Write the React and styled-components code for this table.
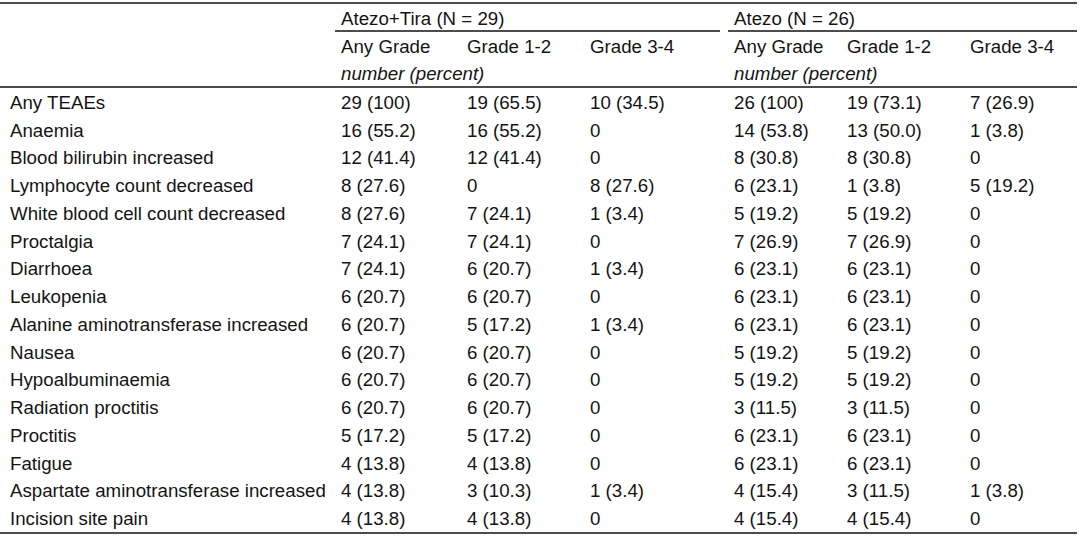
import React from "react";
import styled, { createGlobalStyle } from "styled-components";

const GlobalStyle = createGlobalStyle`
  html, body {
    margin: 0;
    padding: 0;
    background: #ffffff;
  }
  body {
    font-family: "Liberation Sans", Arial, Helvetica, sans-serif;
    color: #141414;
  }
`;

const RULE = "#4d4d4d";

const Frame = styled.div`
  width: 1077px;
  margin-top: 2px;
  border-top: 2px solid ${RULE};
  border-bottom: 2px solid ${RULE};
`;

const Table = styled.table`
  width: 1077px;
  table-layout: fixed;
  border-collapse: separate;
  border-spacing: 0;
  font-size: 18.7px;
  font-family: "Liberation Sans", Arial, Helvetica, sans-serif;
  color: #141414;
`;

const HeadRow = styled.tr`
  height: 28px;
`;

const BodyRow = styled.tr`
  height: 27.75px;
`;

const Cell = styled.td`
  padding: 2px 0 0 ${(p) => (p.$first ? "10px" : "6px")};
  line-height: 20px;
  vertical-align: middle;
  white-space: nowrap;
  text-align: left;
  font-weight: normal;
  font-style: ${(p) => (p.$italic ? "italic" : "normal")};
  border-bottom: ${(p) => (p.$rule ? `2px solid ${RULE}` : "none")};
`;

const GroupCell = styled.th`
  padding: 0;
  vertical-align: bottom;
  text-align: left;
  font-weight: normal;
`;

const GroupLabel = styled.div`
  height: 26px;
  line-height: 29px;
  padding-left: 6px;
  margin-right: ${(p) => p.$gap}px;
  border-bottom: 2px solid ${RULE};
  white-space: nowrap;
`;

const widths = [335, 126, 123, 144, 113, 123, 113];

const rows = [
  ["Any TEAEs", "29 (100)", "19 (65.5)", "10 (34.5)", "26 (100)", "19 (73.1)", "7 (26.9)"],
  ["Anaemia", "16 (55.2)", "16 (55.2)", "0", "14 (53.8)", "13 (50.0)", "1 (3.8)"],
  ["Blood bilirubin increased", "12 (41.4)", "12 (41.4)", "0", "8 (30.8)", "8 (30.8)", "0"],
  ["Lymphocyte count decreased", "8 (27.6)", "0", "8 (27.6)", "6 (23.1)", "1 (3.8)", "5 (19.2)"],
  ["White blood cell count decreased", "8 (27.6)", "7 (24.1)", "1 (3.4)", "5 (19.2)", "5 (19.2)", "0"],
  ["Proctalgia", "7 (24.1)", "7 (24.1)", "0", "7 (26.9)", "7 (26.9)", "0"],
  ["Diarrhoea", "7 (24.1)", "6 (20.7)", "1 (3.4)", "6 (23.1)", "6 (23.1)", "0"],
  ["Leukopenia", "6 (20.7)", "6 (20.7)", "0", "6 (23.1)", "6 (23.1)", "0"],
  ["Alanine aminotransferase increased", "6 (20.7)", "5 (17.2)", "1 (3.4)", "6 (23.1)", "6 (23.1)", "0"],
  ["Nausea", "6 (20.7)", "6 (20.7)", "0", "5 (19.2)", "5 (19.2)", "0"],
  ["Hypoalbuminaemia", "6 (20.7)", "6 (20.7)", "0", "5 (19.2)", "5 (19.2)", "0"],
  ["Radiation proctitis", "6 (20.7)", "6 (20.7)", "0", "3 (11.5)", "3 (11.5)", "0"],
  ["Proctitis", "5 (17.2)", "5 (17.2)", "0", "6 (23.1)", "6 (23.1)", "0"],
  ["Fatigue", "4 (13.8)", "4 (13.8)", "0", "6 (23.1)", "6 (23.1)", "0"],
  ["Aspartate aminotransferase increased", "4 (13.8)", "3 (10.3)", "1 (3.4)", "4 (15.4)", "3 (11.5)", "1 (3.8)"],
  ["Incision site pain", "4 (13.8)", "4 (13.8)", "0", "4 (15.4)", "4 (15.4)", "0"],
];

const grades = ["Any Grade", "Grade 1-2", "Grade 3-4"];

export default function App() {
  return (
    <>
      <GlobalStyle />
      <Frame>
        <Table>
          <colgroup>
            {widths.map((w, i) => (
              <col key={i} style={{ width: w }} />
            ))}
          </colgroup>
          <thead>
            <HeadRow>
              <Cell as="th" $first />
              <GroupCell colSpan={3}>
                <GroupLabel $gap={8}>Atezo+Tira (N = 29)</GroupLabel>
              </GroupCell>
              <GroupCell colSpan={3}>
                <GroupLabel $gap={0}>Atezo (N = 26)</GroupLabel>
              </GroupCell>
            </HeadRow>
            <HeadRow>
              <Cell as="th" $first />
              {[...grades, ...grades].map((g, i) => (
                <Cell as="th" key={i}>
                  {g}
                </Cell>
              ))}
            </HeadRow>
            <HeadRow>
              <Cell as="th" $first $rule />
              <Cell as="th" colSpan={3} $italic $rule>
                number (percent)
              </Cell>
              <Cell as="th" colSpan={3} $italic $rule>
                number (percent)
              </Cell>
            </HeadRow>
          </thead>
          <tbody>
            {rows.map((r, ri) => (
              <BodyRow key={ri}>
                {r.map((c, ci) => (
                  <Cell key={ci} $first={ci === 0}>
                    {c}
                  </Cell>
                ))}
              </BodyRow>
            ))}
          </tbody>
        </Table>
      </Frame>
    </>
  );
}
